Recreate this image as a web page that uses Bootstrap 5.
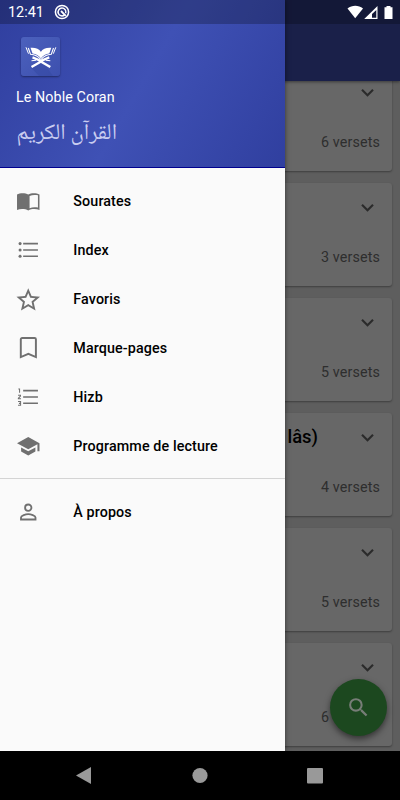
<!DOCTYPE html>
<html lang="fr">
<head>
<meta charset="utf-8">
<meta name="viewport" content="width=device-width, initial-scale=1">
<title>Le Noble Coran</title>
<link href="https://cdn.jsdelivr.net/npm/bootstrap@5.3.0/dist/css/bootstrap.min.css" rel="stylesheet">
<style>
body{font-family:Roboto,"Liberation Sans",sans-serif;background:#000;line-height:1}
svg{display:block;flex:none}
.screen{width:400px;height:800px}
.app-view{height:751px;background:#5e5e5e}
.app-top{height:81px;background:#1a2049;box-shadow:0 1px 3px rgba(0,0,0,.45);z-index:2}
.sura-list{height:670px;padding:0 8px;gap:12px}
.sura{height:103px;background:#676767;border:0;border-radius:3px;box-shadow:0 1px 2px rgba(0,0,0,.35);padding:12px 12px 22px 0;flex:none}
.sura:first-child{margin-top:-13px}
.sura-title{font-size:18.4px;font-weight:500;color:#000;margin-right:37px}
.sura-count{font-size:14.3px;color:#2e2e2e;letter-spacing:.14px}
.fab{width:57px;height:57px;right:13.5px;bottom:15.5px;background:#1c481f;box-shadow:0 3px 6px rgba(0,0,0,.5);z-index:3}
.drawer{width:285px;height:751px;background:#fafafa;z-index:5;box-shadow:0 0 5px rgba(0,0,0,.5)}
.drawer-head{height:168px;border-bottom:1px solid #00008f;background:linear-gradient(120deg,#303f9f 0%,#3f51b5 50%,#303f9f 100%);padding:37px 16px 0}
.logo{width:39px;height:39px;margin-left:5px;border-radius:3px;background:linear-gradient(135deg,#4c61bd,#3d50ae);box-shadow:0 1px 2px rgba(0,0,0,.4)}
.app-name{font-size:14.3px;color:#fff;margin-top:14px;letter-spacing:.08px}
.arabic{font-family:"Noto Naskh Arabic",Amiri,"Liberation Serif","DejaVu Sans",serif;font-size:22.5px;line-height:28px;color:#c9cdf0;margin-top:16px;width:101px;white-space:nowrap}
.menu-group{padding-top:9px}
.menu-row{height:48.9px;padding:0 16px;color:#000;font-size:14.3px;font-weight:500;letter-spacing:.12px}
.menu-row svg{margin-right:32.8px;color:#707070}
.menu-split{height:1px;background:#d4d4d4;margin-top:7.6px;margin-bottom:-.6px}
.status{height:24px;width:400px;background:rgba(0,0,0,.24);z-index:8;color:#fff;padding:0 7px 0 8px}
.clock{font-size:14.4px;padding-top:2px}
.sysbar{height:49px;background:#000}
</style>
<script src="https://cdn.jsdelivr.net/npm/bootstrap@5.3.0/dist/js/bootstrap.bundle.min.js"></script>
</head>
<body class="m-0">
<svg width="0" height="0" class="position-absolute"><defs>
<symbol id="chev" viewBox="0 0 24 24"><path fill="#2b2b2b" d="M7.41 8.59 12 13.17l4.59-4.58L18 10l-6 6-6-6z"/></symbol>
</defs></svg>
<div class="screen position-relative overflow-hidden">
  <main class="app-view d-flex flex-column position-relative overflow-hidden">
    <header class="app-top position-relative flex-shrink-0"></header>
    <section class="sura-list d-flex flex-column overflow-hidden">
      <article class="sura card justify-content-between align-items-end"><div class="d-flex"><svg width="25" height="25"><use href="#chev"/></svg></div><span class="sura-count">6 versets</span></article>
      <article class="sura card justify-content-between align-items-end"><div class="d-flex"><svg width="25" height="25"><use href="#chev"/></svg></div><span class="sura-count">3 versets</span></article>
      <article class="sura card justify-content-between align-items-end"><div class="d-flex"><svg width="25" height="25"><use href="#chev"/></svg></div><span class="sura-count">5 versets</span></article>
      <article class="sura card justify-content-between align-items-end"><div class="d-flex align-items-center"><span class="sura-title">lâs)</span><svg width="25" height="25"><use href="#chev"/></svg></div><span class="sura-count">4 versets</span></article>
      <article class="sura card justify-content-between align-items-end"><div class="d-flex"><svg width="25" height="25"><use href="#chev"/></svg></div><span class="sura-count">5 versets</span></article>
      <article class="sura card justify-content-between align-items-end"><div class="d-flex"><svg width="25" height="25"><use href="#chev"/></svg></div><span class="sura-count">6 versets</span></article>
    </section>
    <div class="fab position-absolute rounded-circle d-flex align-items-center justify-content-center">
      <svg width="25" height="25" viewBox="0 0 24 24" fill="#777d77"><path d="M15.5 14h-.79l-.28-.27A6.47 6.47 0 0 0 16 9.5 6.5 6.5 0 1 0 9.5 16c1.61 0 3.09-.59 4.23-1.57l.27.28v.79l5 4.99L20.49 19zm-6 0C7.01 14 5 11.99 5 9.5S7.01 5 9.5 5 14 7.01 14 9.5 11.99 14 9.5 14z"/></svg>
    </div>
  </main>

  <aside class="drawer position-absolute top-0 start-0">
    <div class="drawer-head">
      <div class="logo"><svg width="39" height="39" viewBox="0 0 39 39">
        <path d="M9 29.500 20 22l12 17H18z" fill="#34469f" opacity=".45"/>
        <g id="half" fill="none" stroke="#fff">
          <path fill="#fff" stroke="none" d="M9.500 10.800c4.500-.4 8.500.6 10.500 4.200v6.500c-2.200-3.300-5-4.600-8.500-5z"/>
          <path stroke-width="1.100" d="M7.300 11l2.200 6.300c4 .2 7.500 1.700 10.300 5.400"/>
          <path stroke-width="1" d="M5 10.300l2.500 6.400"/>
          <path stroke-width="2.300" d="M11.500 20.300c3.500 1.200 7 3 10 5.200l7.800 4.500"/>
          <path stroke-width="1.100" d="M10.500 23.700l4.500-.5"/>
        </g>
        <use href="#half" transform="translate(39.800) scale(-1 1)"/>
      </svg></div>
      <div class="app-name">Le Noble Coran</div>
      <div class="arabic" lang="ar" dir="rtl">القرآن الكريم</div>
    </div>
    <nav class="menu-group">
      <div class="menu-row d-flex align-items-center"><svg width="24.5" height="24.500" viewBox="0 0 24 24"><path fill="currentColor" d="M1 5.500C4 3.700 9 3.700 12 5.500c3-1.800 8-1.800 11 0V20.500c-3-1.300-8-1.300-11 .5-3-1.800-8-1.800-11-.5zM13.300 6.800v12c2.500-1.100 5.500-1.100 8.200-.6v-12c-2.700-.7-5.700-.6-8.200.6z"/></svg>Sourates</div>
      <div class="menu-row d-flex align-items-center"><svg width="24.5" height="24.5" viewBox="0 0 24 24"><path stroke="currentColor" stroke-width="1.500" d="M7 5.500h14.500M7 11.700h14.500M7 17.900h14.500"/><g fill="currentColor"><circle cx="4" cy="5.500" r="1.500"/><circle cx="4" cy="11.700" r="1.500"/><circle cx="4" cy="17.900" r="1.500"/></g></svg>Index</div>
      <div class="menu-row d-flex align-items-center"><svg width="24.5" height="24.5" viewBox="1.600 1 20.800 20.800"><path fill="currentColor" d="m22 9.240-7.190-.62L12 2 9.190 8.630 2 9.240l5.460 4.730L5.820 21 12 17.270 18.180 21l-1.630-7.030zM12 15.400l-3.760 2.270 1-4.280-3.320-2.880 4.380-.38L12 6.100l1.710 4.040 4.380.38-3.320 2.880 1 4.280z"/></svg>Favoris</div>
      <div class="menu-row d-flex align-items-center"><svg width="24.500" height="24.5" viewBox="0 0 24 24"><path fill="none" stroke="currentColor" stroke-width="1.900" d="M4.700 3.200a1.300 1.300 0 0 1 1.300-1.300h12.200a1.300 1.300 0 0 1 1.300 1.300v17.400l-7.400-3.200-7.400 3.200z"/></svg>Marque-pages</div>
      <div class="menu-row d-flex align-items-center"><svg width="24.5" height="24.5" viewBox="0 0 24 24"><path stroke="currentColor" stroke-width="1.500" d="M7 5.500h14.500M7 11.700h14.500M7 17.900h14.500"/><path fill="none" stroke="currentColor" stroke-width="1" d="M2.300 4h1.200v3.500M2 10.100h2.400v.8L2.300 13v.5h2.600M2 16.200h2.500v3.600H2M2.900 18h1.500"/></svg>Hizb</div>
      <div class="menu-row d-flex align-items-center"><svg width="24.5" height="24.5" viewBox="0 0 24 24"><path fill="currentColor" d="M5 13.180v4L12 21l7-3.820v-4L12 17zM12 3 1 9l11 6 9-4.910V17h2V9z"/></svg>Programme de lecture</div>
      <div class="menu-split"></div>
      <div class="menu-group"><div class="menu-row d-flex align-items-center"><svg width="24.5" height="24.5" viewBox="0 0 24 24"><path fill="none" stroke="currentColor" stroke-width="1.800" d="M15.100 7.500a3.100 3.100 0 1 1-6.200 0 3.100 3.100 0 0 1 6.200 0zM4.900 19.100v-2c0-2 4.700-3.200 7.100-3.200s7.100 1.200 7.100 3.200v2z"/></svg>À propos</div></div>
    </nav>
  </aside>

  <div class="status position-absolute top-0 start-0 d-flex align-items-center">
    <span class="clock">12:41</span>
    <svg class="ms-auto order-2" width="46" height="16" viewBox="0 0 46 16"><g fill="#fff"><path d="M.5 4.400C5 1 11.500 1 16 4.400L8.200 14.300z"/><path fill-rule="evenodd" d="M30.500 2v13H17.200zM29.300 6v7.800h-4.300V10z"/><path d="M37.500 3.300h2V2h4v1.300h2V15h-8z"/></g></svg>
    <svg class="ms-2" width="20" height="16" viewBox="0 0 20 16"><g fill="none" stroke="#fff"><circle cx="10" cy="8" r="6.600" stroke-width="1.500"/><path d="M12.600 10.900A3.900 3.900 0 1 1 13.700 9.200" stroke-width="1.500"/><path d="m9 7 4.800 4.900" stroke-width="1.800"/></g></svg>
  </div>

  <footer class="sysbar d-flex align-items-center">
    <svg width="400" height="49" viewBox="0 0 400 49" fill="#999"><path d="M76 24.500 91 16v17z"/><circle cx="200" cy="24.500" r="7.600"/><rect x="307" y="17" width="16" height="15.500" rx="1"/></svg>
  </footer>
</div>
</body>
</html>
